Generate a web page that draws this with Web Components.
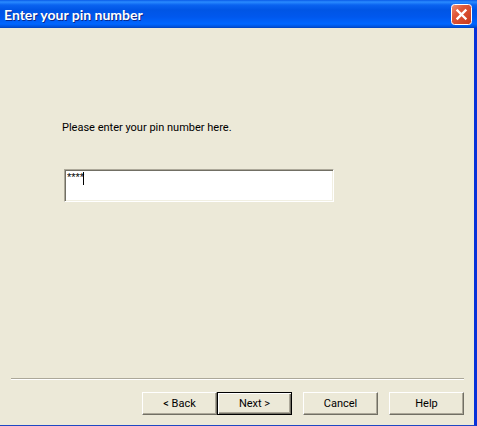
<!DOCTYPE html>
<html lang="en">
<head>
<meta charset="utf-8">
<meta name="viewport" content="width=device-width, initial-scale=1">
<title>Enter your pin number</title>
<style>
  body {
    margin: 0;
    background: #ece9d8;
    color: #000;
    font: 11px/16px Roboto, "Liberation Sans", Arial, sans-serif;
  }
</style>
</head>
<body>
<wizard-window>
  <title-bar slot="title">Enter your pin number</title-bar>
  <pin-field value="****">Please enter your pin number here.</pin-field>
  <wizard-actions slot="footer">
    <div>
      <wizard-button>&lt; Back</wizard-button>
      <wizard-button primary>Next &gt;</wizard-button>
    </div>
    <wizard-button>Cancel</wizard-button>
    <wizard-button>Help</wizard-button>
  </wizard-actions>
</wizard-window>

<script>
const closeIcon = `
<svg width="21" height="21" viewBox="0 0 21 21" aria-hidden="true">
  <defs>
    <linearGradient id="red" x1="0" y1="0" x2="1" y2="1">
      <stop offset="0" stop-color="#ee9479" />
      <stop offset="0.35" stop-color="#e0583a" />
      <stop offset="1" stop-color="#c8381a" />
    </linearGradient>
  </defs>
  <rect x="0.5" y="0.5" width="20" height="20" rx="3" fill="url(#red)" stroke="#fff" />
  <path d="M6.5 6.5l8 8M14.5 6.5l-8 8" stroke="#fff" stroke-width="2.4" stroke-linecap="square" />
</svg>
`;

function define(name, html, setup) {
  const template = document.createElement("template");
  template.innerHTML = html;

  customElements.define(
    name,
    class extends HTMLElement {
      constructor() {
        super();
        this.attachShadow({ mode: "open" });
        this.shadowRoot.appendChild(template.content.cloneNode(true));
      }

      connectedCallback() {
        if (setup) setup(this);
      }
    }
  );
}

define("wizard-window", `
  <style>
    :host {
      box-sizing: border-box;
      display: flex;
      flex-direction: column;
      min-height: 100vh;
      border-right: 3px solid #0831d9;
      border-bottom: 1px solid #1f48c4;
    }

    main {
      flex: 1;
      padding: 92px 64px 24px 62px;
    }
  </style>
  <slot name="title"></slot>
  <main><slot></slot></main>
  <slot name="footer"></slot>
`);

define("title-bar", `
  <style>
    :host {
      display: flex;
      align-items: center;
      justify-content: space-between;
      height: 28px;
      margin-right: -3px;
      padding: 0 5px 0 4px;
      background: linear-gradient(#0a5be8 0, #2a8bff 2px, #0a63f0 5px, #0055e5 10px, #0058ee 17px, #0066ff 24px, #0050d8 27px, #0040b8 28px);
    }

    h1 {
      margin: 0;
      padding-top: 2px;
      color: #fff;
      font: bold 14px/20px Lato, "Trebuchet MS", sans-serif;
      text-shadow: 1px 1px #0a2a8c;
    }

    button {
      display: flex;
      padding: 0;
      border: 0;
      background: none;
    }
  </style>
  <h1><slot></slot></h1>
  <button type="button" aria-label="Close">${closeIcon}</button>
`);

define("pin-field", `
  <style>
    :host {
      display: block;
    }

    label {
      display: block;
      margin-bottom: 33px;
    }

    .box {
      position: relative;
      margin-left: 2px;
    }

    input {
      box-sizing: border-box;
      display: block;
      width: 78%;
      height: 33px;
      padding: 0 2px 18px;
      border: 1px solid;
      border-color: #aca899 #fff #fff #aca899;
      border-radius: 0;
      outline: 0;
      background: #fff;
      box-shadow: inset 1px 1px #716f64, inset -1px -1px #f1efe2;
      color: #000;
      font: 11px/12px "Liberation Sans", Arial, sans-serif;
    }

    /* insertion point after the last character */
    .caret {
      position: absolute;
      top: 3px;
      left: 19px;
      width: 1px;
      height: 13px;
      background: #000;
    }
  </style>
  <label for="pin"><slot></slot></label>
  <div class="box">
    <input id="pin" type="text" autocomplete="off">
    <span class="caret"></span>
  </div>
`, (el) => {
  el.shadowRoot.querySelector("input").value = el.getAttribute("value") || "";
});

define("wizard-actions", `
  <style>
    :host {
      display: block;
      padding: 0 10px 10px 11px;
    }

    hr {
      height: 1px;
      margin: 0 0 12px;
      border: 0;
      border-top: 1px solid #aca899;
      background: #fff;
    }

    .row {
      display: flex;
      justify-content: flex-end;
      gap: 11px;
    }

    ::slotted(div) {
      display: flex;
    }
  </style>
  <hr>
  <div class="row"><slot></slot></div>
`);

define("wizard-button", `
  <style>
    :host {
      display: block;
    }

    button {
      box-sizing: border-box;
      display: block;
      width: 75px;
      height: 23px;
      padding: 0;
      border: 1px solid;
      border-color: #fff #716f64 #716f64 #fff;
      border-radius: 0;
      background: #ece9d8;
      box-shadow: inset -1px -1px #aca899;
      color: #000;
      font: inherit;
    }

    :host([primary]) button {
      border-color: #000;
      box-shadow: inset 1px 1px #fff, inset -1px -1px #716f64, inset -2px -2px #aca899;
    }
  </style>
  <button type="button"><slot></slot></button>
`);
</script>
</body>
</html>
